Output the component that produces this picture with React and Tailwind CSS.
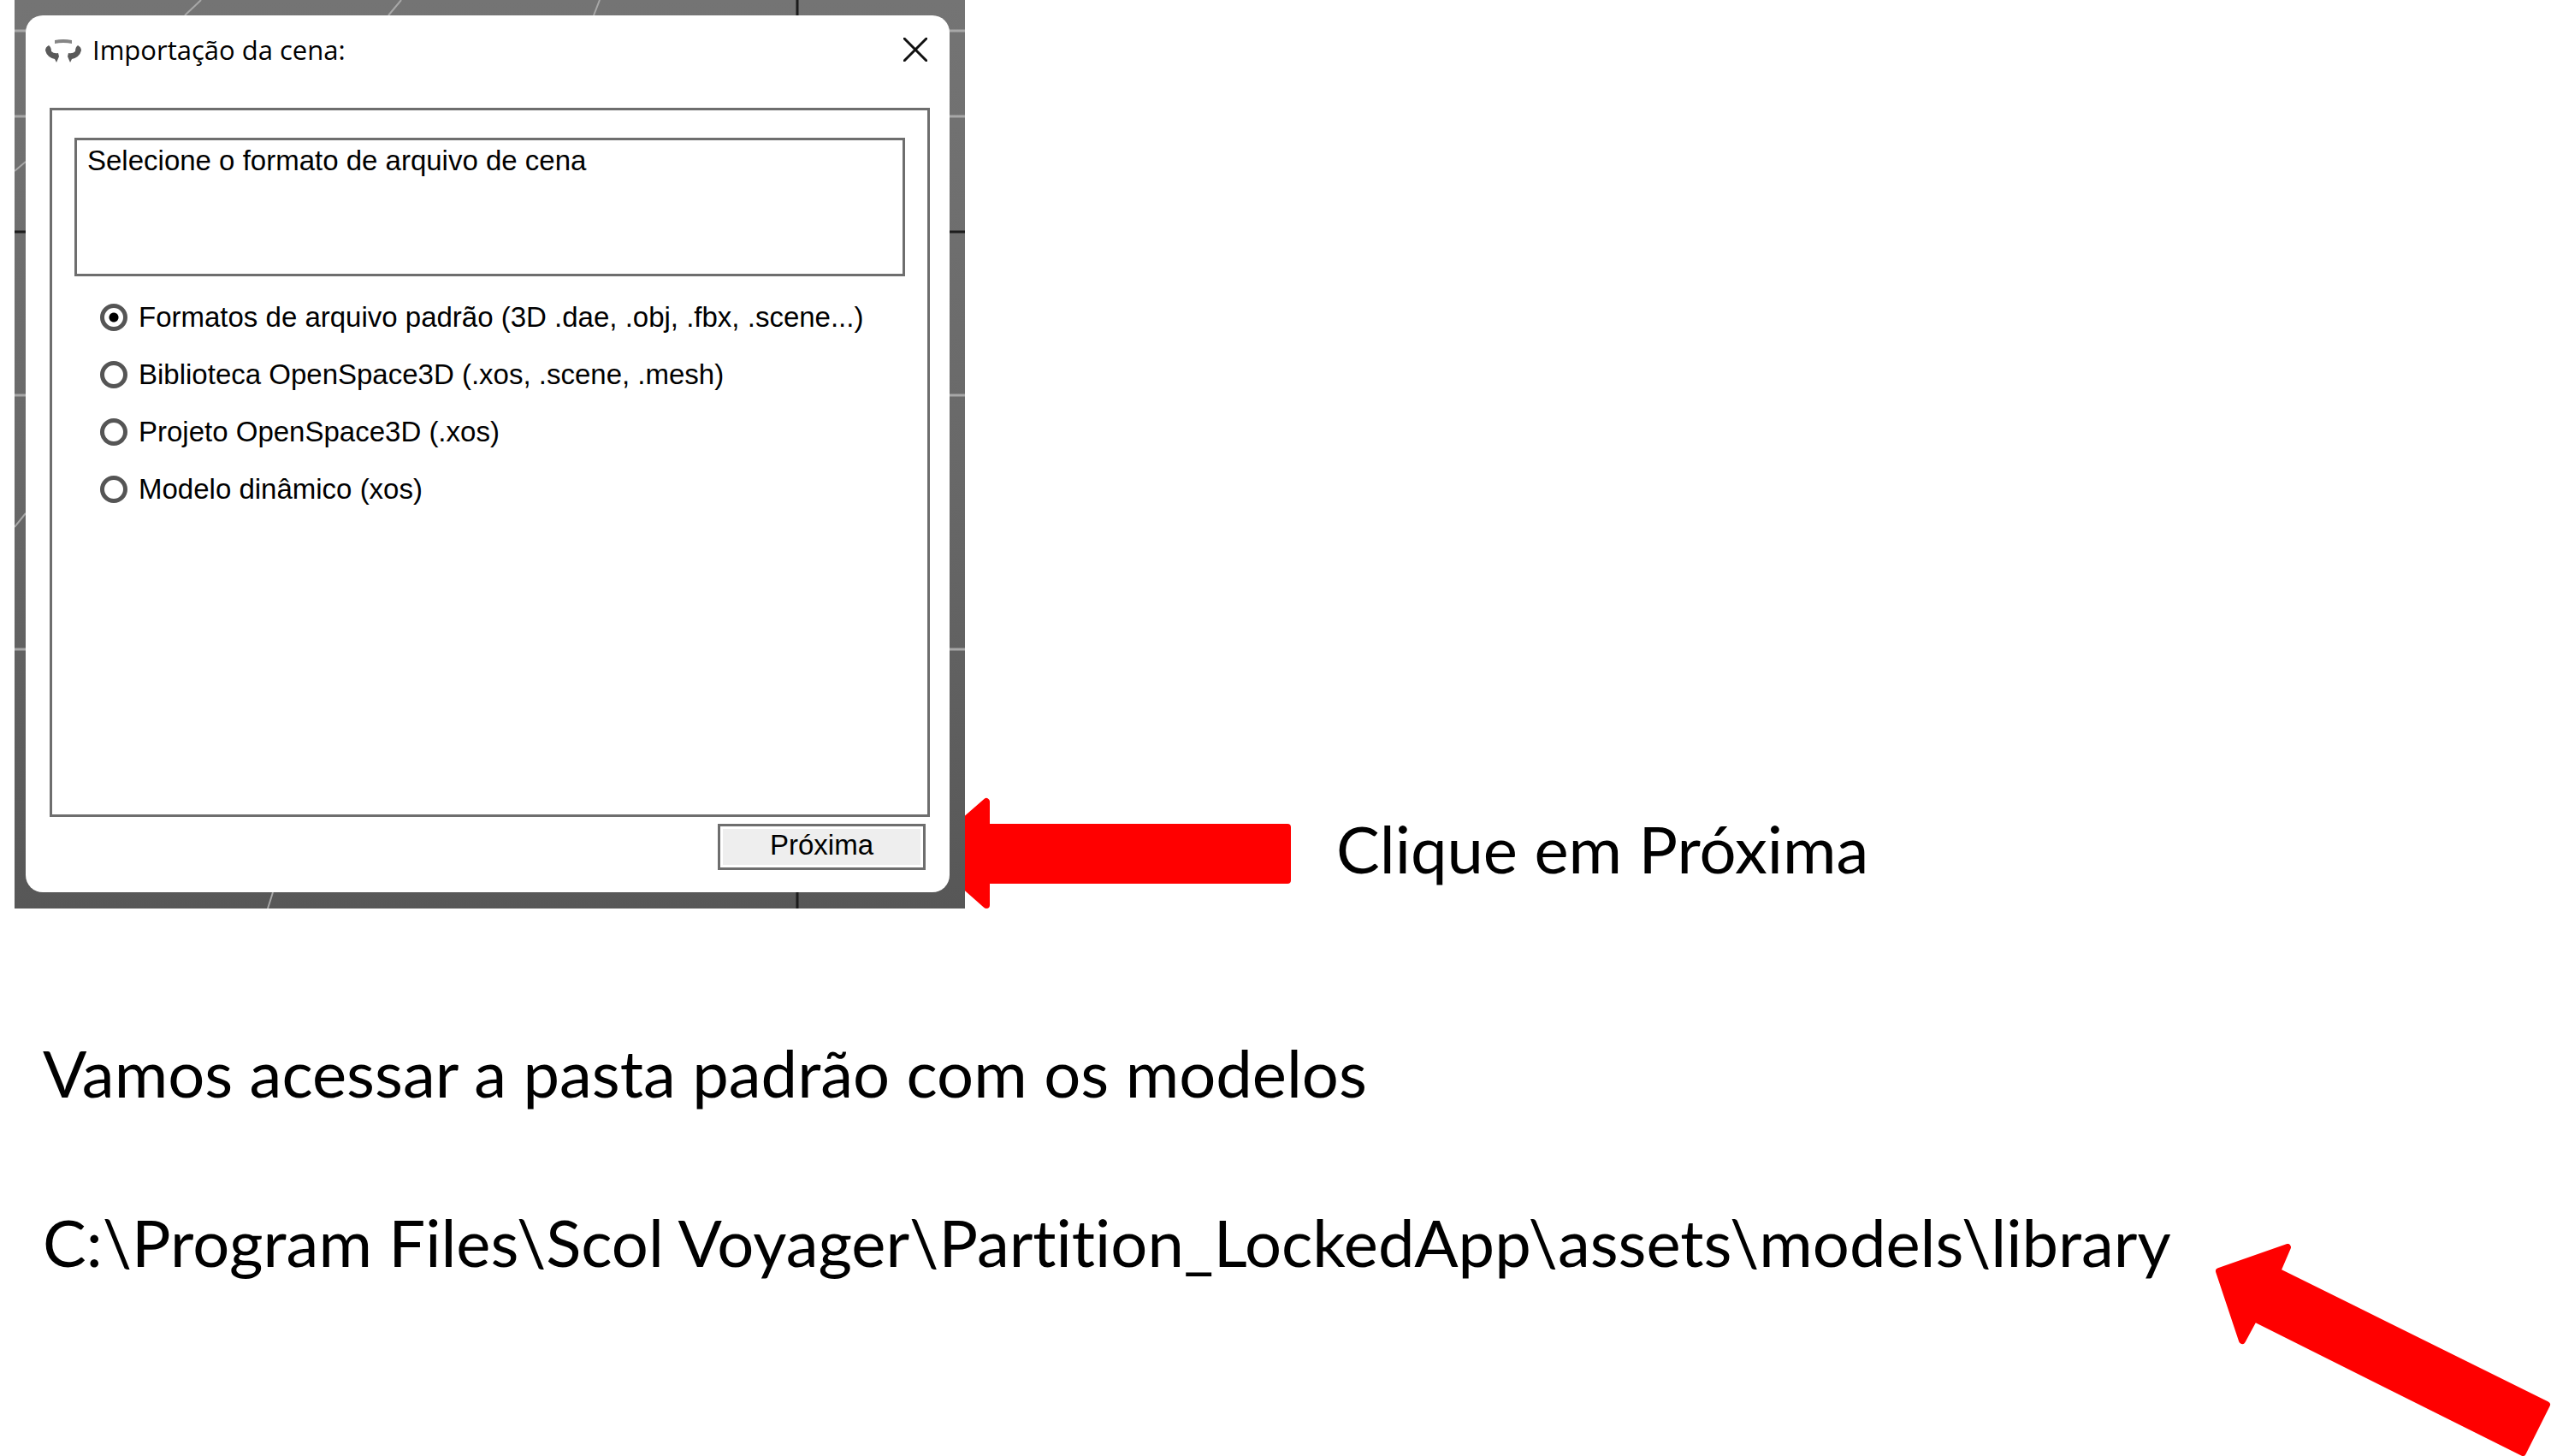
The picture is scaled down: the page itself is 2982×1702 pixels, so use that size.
const options = [
  'Formatos de arquivo padrão (3D .dae, .obj, .fbx, .scene...)',
  'Biblioteca OpenSpace3D (.xos, .scene, .mesh)',
  'Projeto OpenSpace3D (.xos)',
  'Modelo dinâmico (xos)',
];

function Viewport() {
  return (
    <svg className="absolute inset-0 h-full w-full" viewBox="0 0 1111 1062" preserveAspectRatio="none" fill="none" aria-hidden="true">
      <g stroke="#a8a8a8" strokeWidth="3">
        <path d="M0 36H1111M0 136H1111M0 462H1111M0 759H1111" />
        <path d="M218 0L199 18M452 0L437 18M684 0L677 18M0 200L13 189M0 616L13 600M302 1043L296 1062" strokeWidth="2" />
      </g>
      <path d="M0 271H1111M915 0V1062" stroke="#1c1c1c" strokeWidth="3" />
    </svg>
  );
}

function AppIcon() {
  return (
    <svg className="h-8 w-[44px]" viewBox="0 0 44 32" aria-hidden="true">
      <path d="M12 5Q22 3 32 5V9Q22 7 12 9Z" fill="#858585" />
      <path d="M5 11Q1 13 1 17Q3 25 12 27L14 31L17 24L16 20Q11 21 8 18Q8 13 5 11Z" fill="#5a5a5a" />
      <path d="M39 11Q43 13 43 17Q41 25 32 27L30 31L27 24L28 20Q33 21 36 18Q36 13 39 11Z" fill="#5a5a5a" />
    </svg>
  );
}

function ImportDialog() {
  return (
    <section className="relative flex flex-col rounded-[20px] bg-white" aria-label="Importação da cena">
      <header className="flex h-[80px] items-center justify-between pr-[26px] pl-[22px]">
        <div className="flex items-center gap-3">
          <AppIcon />
          <h1 className="font-['Open_Sans',sans-serif] text-[31px] leading-10">Importação da cena:</h1>
        </div>
        <button type="button" aria-label="Fechar">
          <svg className="h-7 w-7" viewBox="0 0 28 28" fill="none" stroke="#111" strokeWidth="3" strokeLinecap="round">
            <path d="M1 1L27 27M27 1L1 27" />
          </svg>
        </button>
      </header>
      <div className="mt-7 mr-[23px] ml-7 h-[829px] border-[3px] border-[#6e6e6e] px-[26px] pt-8 font-['Liberation_Sans',Arial,sans-serif] text-[33px] leading-10">
        <p className="h-[162px] border-[3px] border-[#6e6e6e] px-3 pt-1">Selecione o formato de arquivo de cena</p>
        <fieldset className="mt-7 ml-[30px] flex flex-col gap-[27px]">
          {options.map((option, i) => (
            <label key={option} className="flex items-center gap-[13px] whitespace-nowrap">
              <input
                type="radio"
                name="format"
                defaultChecked={i === 0}
                className="h-8 w-8 shrink-0 appearance-none rounded-full border-[5px] border-[#555] bg-white checked:bg-[radial-gradient(circle,black_5px,white_6px)]"
              />
              {option}
            </label>
          ))}
        </fieldset>
      </div>
      <footer className="flex justify-end px-7 pt-2 pb-[26px]">
        <button
          type="button"
          className="h-[54px] w-[243px] border-[3px] border-[#6e6e6e] bg-[#eee] pb-1 font-['Liberation_Sans',Arial,sans-serif] text-[33px] leading-10 shadow-[inset_0_0_0_3px_white]"
        >
          Próxima
        </button>
      </footer>
    </section>
  );
}

export default function App() {
  return (
    <main className="min-h-screen overflow-hidden bg-white font-[Lato,Calibri,sans-serif] text-[76px] leading-[100px] text-black [font-variant-ligatures:none]">
      <div className="flex items-end pl-[17px]">
        <div className="relative w-[1111px] shrink-0 bg-linear-to-b from-[#747474] via-[#696969] to-[#575757] pt-[18px] pr-[18px] pb-[19px] pl-[13px]">
          <Viewport />
          <ImportDialog />
        </div>
        <svg className="h-[130px] w-[382px] shrink-0" viewBox="0 0 382 130" fill="#f00" stroke="#f00" strokeWidth="8" strokeLinejoin="round" aria-hidden="true">
          <path d="M-44 65L25 5V35H377V97H25V126Z" />
        </svg>
        <p className="mb-5 ml-[52px] whitespace-nowrap">Clique em Próxima</p>
      </div>
      <p className="mt-[142px] ml-[50px]">Vamos acessar a pasta padrão com os modelos</p>
      <div className="mt-[98px] flex items-start justify-between pl-[50px]">
        <p className="whitespace-nowrap">C:\Program Files\Scol Voyager\Partition_LockedApp\assets\models\library</p>
        <svg className="mt-[52px] h-[248px] w-[392px] shrink-0" viewBox="0 0 392 248" fill="#f00" stroke="#f00" strokeWidth="8" strokeLinejoin="round" aria-hidden="true">
          <path d="M4 32L84 4L72 32L387 188L359 244L45 87L31 113Z" />
        </svg>
      </div>
    </main>
  );
}
